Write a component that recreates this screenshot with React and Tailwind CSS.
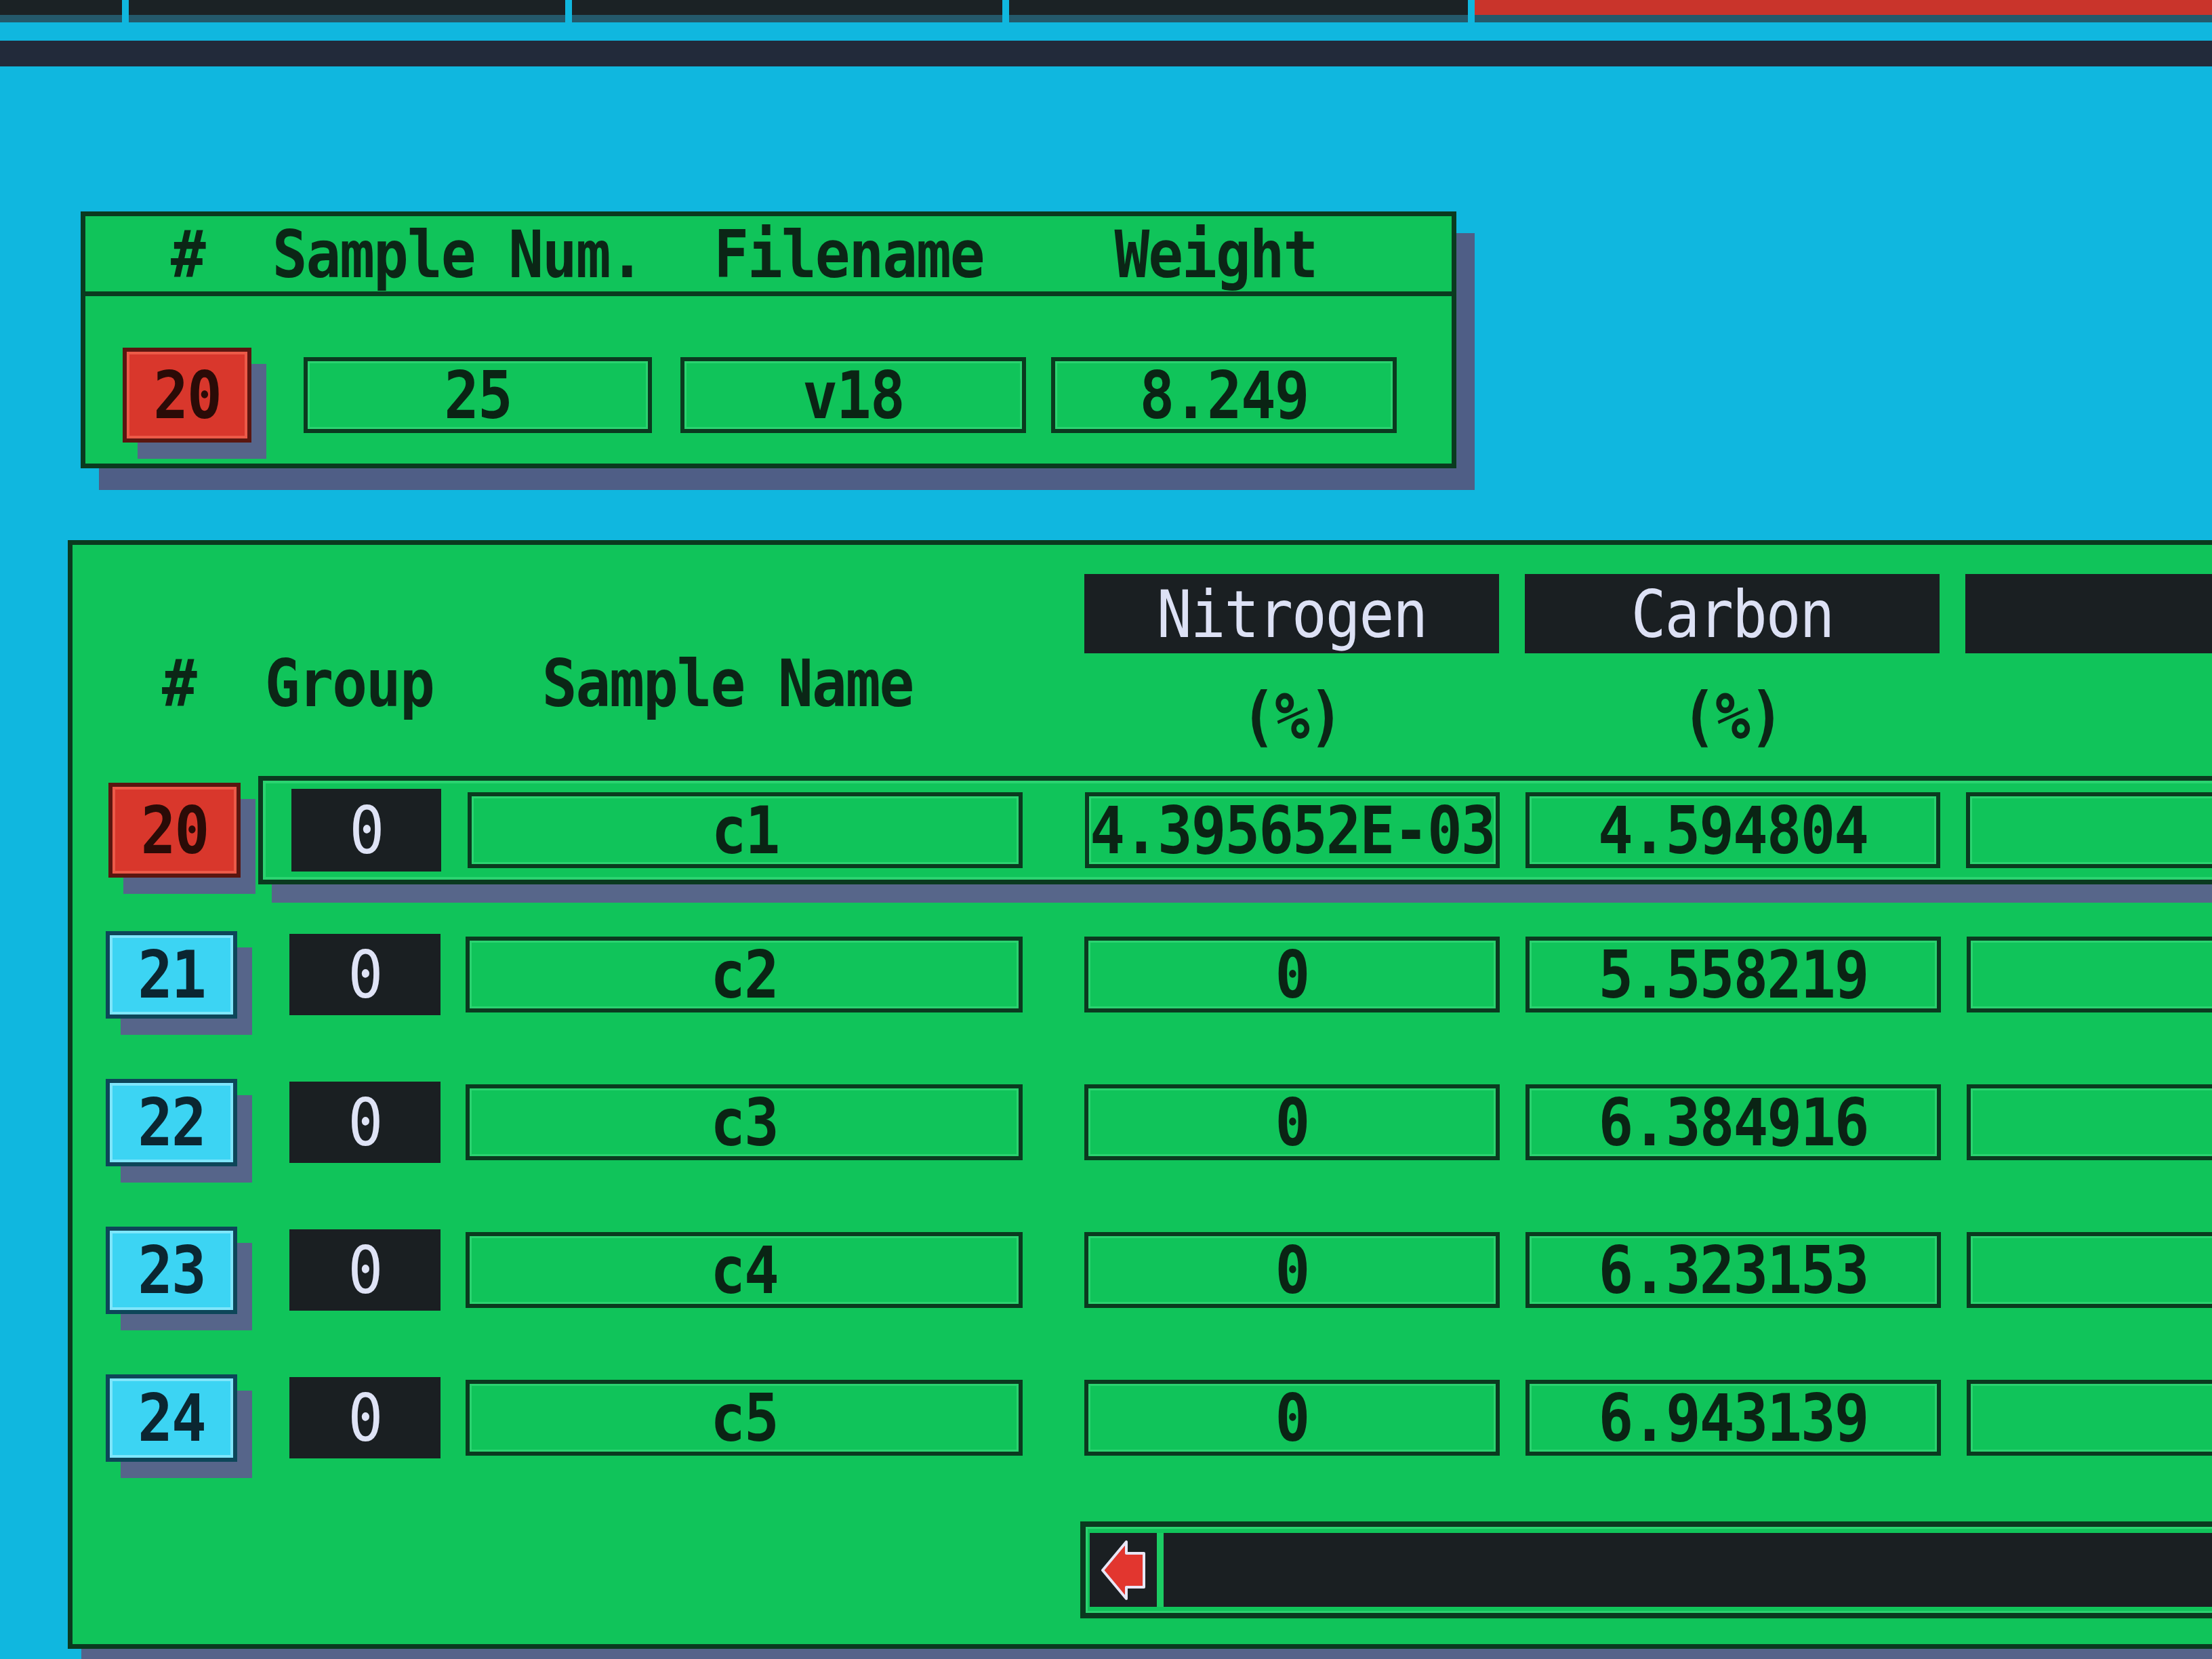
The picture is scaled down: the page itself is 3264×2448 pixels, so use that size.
import clsx from "clsx";

const EDGE = "border-[#0a3a1f]";

function T({ children, className }) {
  return (
    <span
      className={clsx(
        "inline-block scale-y-[1.12] whitespace-pre text-[86px] leading-none tracking-[-2px]",
        className
      )}
    >
      {children}
    </span>
  );
}

function NumBox({ n, red, className }) {
  return (
    <div
      className={clsx(
        "flex shrink-0 items-center justify-center border-[6px]",
        red
          ? "border-[#5a1610] bg-[#d9372c] shadow-[inset_0_0_0_4px_#ec5a48,22px_24px_0_#56658a]"
          : "border-[#0d4659] bg-[#3cd4f3] shadow-[inset_0_0_0_4px_#7fe6fb,22px_24px_0_#56658a]",
        className
      )}
    >
      <T className={red ? "text-[#2b0b07]" : "text-[#0b2631]"}>{n}</T>
    </div>
  );
}

function Field({ value, className }) {
  return (
    <div
      className={clsx(
        "flex shrink-0 items-center justify-center border-[6px] bg-[#10c45a] shadow-[inset_0_0_0_3px_#2bd370]",
        EDGE,
        className
      )}
    >
      <T className="text-[#0a2414]">{value}</T>
    </div>
  );
}

function GroupBox({ className }) {
  return (
    <div
      className={clsx(
        "flex shrink-0 items-center justify-center bg-[#1a1f22]",
        className
      )}
    >
      <T className="font-normal text-[#dfe3f6]">0</T>
    </div>
  );
}

function LeftArrow() {
  return (
    <svg width="72" height="94" viewBox="0 0 72 94">
      <path
        d="M5 47 L40 5 L40 22 L66 22 L66 72 L40 72 L40 89 Z"
        fill="#e2362f"
        stroke="#e8e6f6"
        strokeWidth="4"
        strokeLinejoin="round"
      />
    </svg>
  );
}

const rows = [
  { n: "21", name: "c2", c: "5.558219" },
  { n: "22", name: "c3", c: "6.384916" },
  { n: "23", name: "c4", c: "6.323153" },
  { n: "24", name: "c5", c: "6.943139" },
];

export default function App() {
  return (
    <div className="relative h-[2448px] w-[3264px] overflow-hidden bg-[#10b7df] font-['DejaVu_Sans_Mono',monospace] font-bold text-[#0b2616]">
      {/* tab strip at the top edge */}
      <div className="flex h-[33px] gap-[10px]">
        {[180, 644, 635, 677].map((w) => (
          <div key={w} className="flex flex-col" style={{ width: w }}>
            <div className="h-[22px] bg-[#1b2225]" />
            <div className="h-[11px] bg-[#24596b]" />
          </div>
        ))}
        <div className="flex flex-1 flex-col">
          <div className="h-[22px] bg-[#c9342b]" />
          <div className="h-[11px] bg-[#24596b]" />
        </div>
      </div>
      <div className="mt-[27px] h-[38px] bg-[#222a3a]" />

      {/* sample header panel */}
      <div className={clsx("ml-[119px] mt-[214px] h-[379px] w-[2030px] border-[7px] bg-[#10c45a] shadow-[27px_32px_0_#4f5e86]", EDGE)}>
        <div className={clsx("flex h-[118px] items-center border-b-[7px]", EDGE)}>
          <T className="ml-[126px]">#</T>
          <T className="ml-[100px]">Sample Num.</T>
          <T className="ml-[104px]">Filename</T>
          <T className="ml-[193px]">Weight</T>
        </div>
        <div className="flex items-center pt-[76px]">
          <NumBox n="20" red className="ml-[55px] h-[140px] w-[190px]" />
          <Field value="25" className="ml-[77px] h-[112px] w-[514px]" />
          <Field value="v18" className="ml-[42px] h-[112px] w-[510px]" />
          <Field value="8.249" className="ml-[37px] h-[112px] w-[510px]" />
        </div>
      </div>

      {/* results table panel */}
      <div className={clsx("ml-[100px] mt-[106px] h-[1636px] w-[3300px] border-[7px] border-r-0 bg-[#10c45a] shadow-[20px_20px_0_#55638a]", EDGE)}>
        <div className="flex h-[341px] items-start pt-[43px]">
          <div className="flex h-[322px] w-[1493px] shrink-0 items-center">
            <T className="ml-[132px]">#</T>
            <T className="ml-[102px]">Group</T>
            <T className="ml-[160px]">Sample Name</T>
          </div>
          <div className="flex gap-[38px]">
            {["Nitrogen", "Carbon", ""].map((h, i) => (
              <div key={i} className="flex w-[612px] shrink-0 flex-col items-center">
                <div className="flex h-[117px] w-full items-center justify-center bg-[#1a1f22]">
                  <T className="font-normal text-[#dde1f5]">{h}</T>
                </div>
                {h && <T className="mt-[49px]">(%)</T>}
              </div>
            ))}
          </div>
        </div>

        {/* selected row */}
        <div className="flex h-[160px] items-center">
          <NumBox n="20" red className="ml-[53px] h-[140px] w-[195px]" />
          <div className={clsx("ml-[26px] flex h-[160px] flex-1 items-center border-[7px] border-r-0 shadow-[inset_0_0_0_4px_#2bd370,20px_27px_0_#57668a]", EDGE)}>
            <GroupBox className="ml-[42px] h-[122px] w-[221px]" />
            <Field value="c1" className="ml-[39px] h-[112px] w-[819px]" />
            <Field value="4.395652E-03" className="ml-[92px] h-[112px] w-[612px]" />
            <Field value="4.594804" className="ml-[38px] h-[112px] w-[612px]" />
            <Field value="" className="ml-[38px] h-[112px] w-[612px]" />
          </div>
        </div>

        <div className="mt-[63px] flex flex-col gap-[78px]">
          {rows.map((r) => (
            <div key={r.n} className="flex h-[140px] items-center">
              <NumBox n={r.n} className="ml-[49px] h-[129px] w-[194px]" />
              <GroupBox className="ml-[77px] h-[120px] w-[223px]" />
              <Field value={r.name} className="ml-[37px] h-[112px] w-[822px]" />
              <Field value="0" className="ml-[91px] h-[112px] w-[613px]" />
              <Field value={r.c} className="ml-[38px] h-[112px] w-[613px]" />
              <Field value="" className="ml-[38px] h-[112px] w-[613px]" />
            </div>
          ))}
        </div>

        {/* horizontal scroll bar */}
        <div className={clsx("ml-[1487px] mt-[83px] flex h-[143px] border-[8px] border-r-0 py-[9px] pl-[6px] shadow-[inset_0_0_0_3px_#2bd370]", EDGE)}>
          <div className="flex w-[99px] items-center justify-center bg-[#1a1f22]">
            <LeftArrow />
          </div>
          <div className="w-[10px] bg-[#1ccc63]" />
          <div className="flex-1 bg-[#1a1f22]" />
        </div>
      </div>
    </div>
  );
}
